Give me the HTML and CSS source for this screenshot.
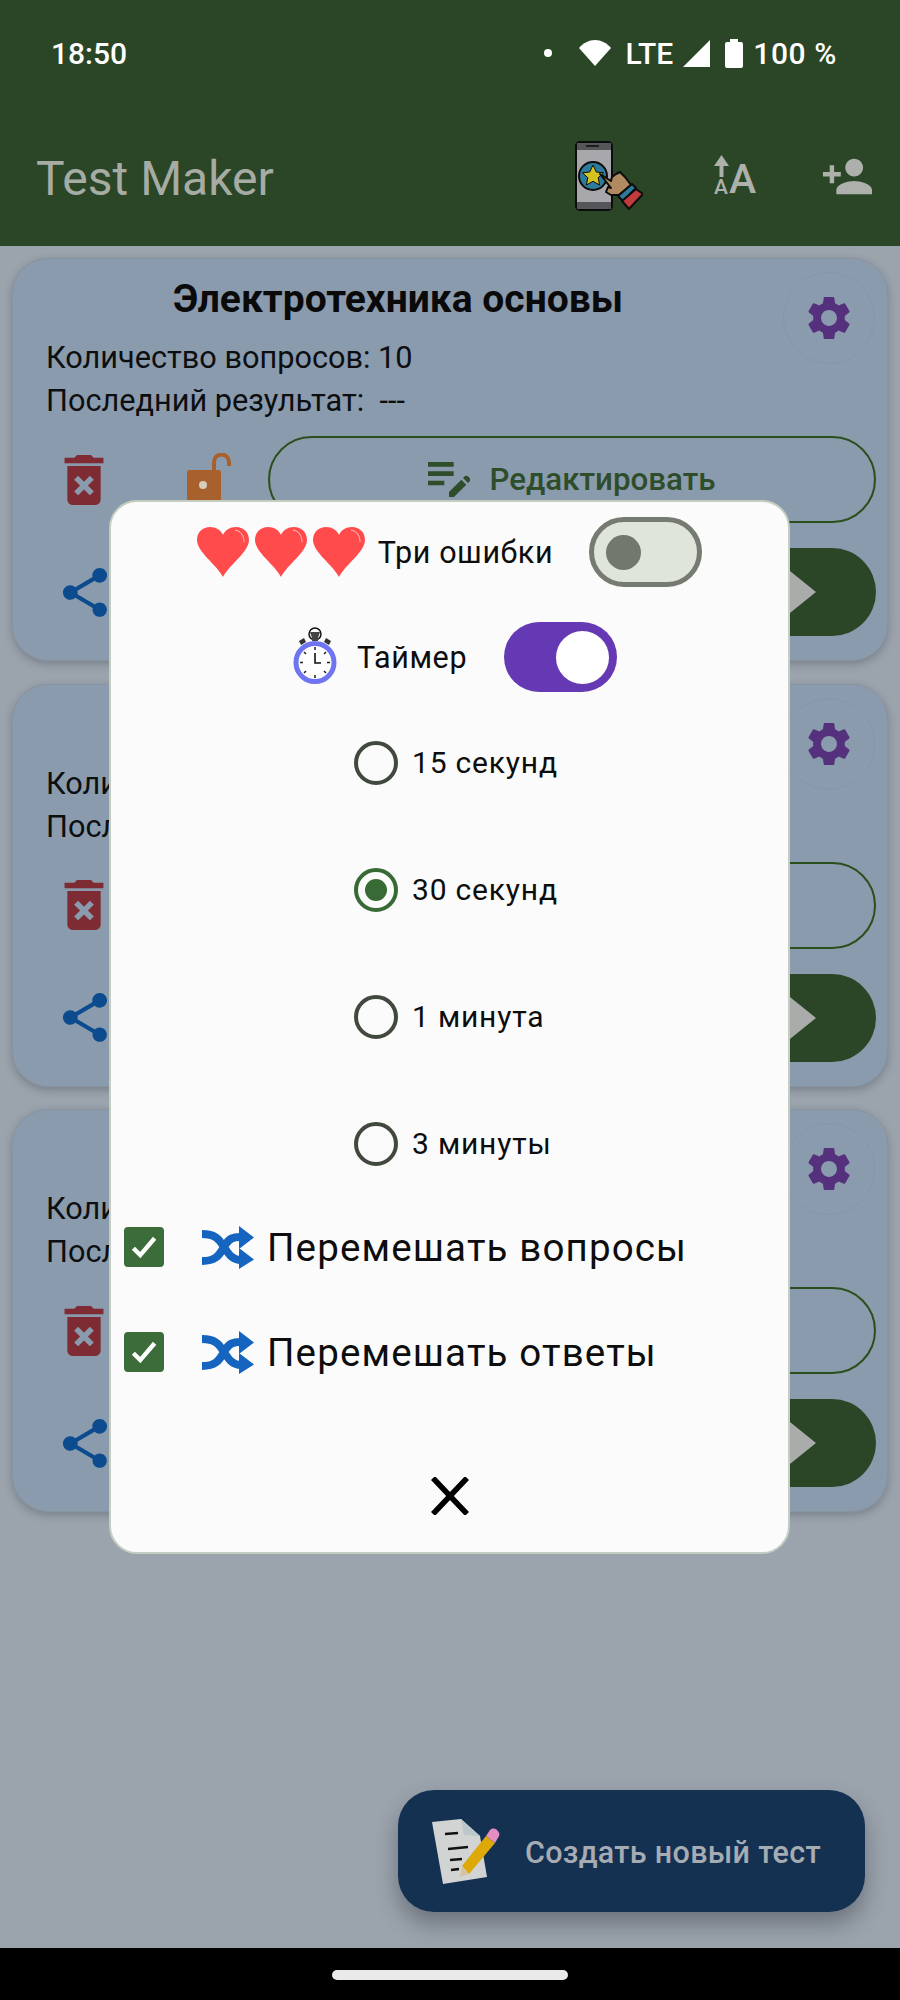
FILE: index.html
```html
<!DOCTYPE html>
<html lang="ru">
<head>
	<meta charset="UTF-8">
	<title>Test Maker</title>
	<link rel="stylesheet" href="styles.css">
</head>
<body>
<svg class="defs" aria-hidden="true">
	<symbol id="i-gear" viewBox="2.5 2 19 20"><path d="M19.14 12.94c.04-.3.06-.61.06-.94 0-.32-.02-.64-.07-.94l2.03-1.58c.18-.14.23-.41.12-.61l-1.92-3.32c-.12-.22-.37-.29-.59-.22l-2.39.96c-.5-.38-1.03-.7-1.62-.94l-.36-2.54c-.04-.24-.24-.41-.48-.41h-3.84c-.24 0-.43.17-.47.41l-.36 2.54c-.59.24-1.13.57-1.62.94l-2.39-.96c-.22-.08-.47 0-.59.22L2.74 8.87c-.12.21-.08.47.12.61l2.03 1.58c-.05.3-.09.63-.09.94s.02.64.07.94l-2.03 1.58c-.18.14-.23.41-.12.61l1.92 3.32c.12.22.37.29.59.22l2.39-.96c.5.38 1.03.7 1.62.94l.36 2.54c.05.24.24.41.48.41h3.84c.24 0 .44-.17.47-.41l.36-2.54c.59-.24 1.13-.56 1.62-.94l2.39.96c.22.08.47 0 .59-.22l1.92-3.32c.12-.22.07-.47-.12-.61l-2.01-1.58zM12 15.6c-1.98 0-3.6-1.62-3.6-3.6s1.62-3.6 3.6-3.6 3.6 1.62 3.6 3.6-1.62 3.6-3.6 3.6z"/></symbol>
	<symbol id="i-trash" viewBox="5 3 14 18"><path d="M6 19c0 1.1.9 2 2 2h8c1.1 0 2-.9 2-2V7H6v12zm2.46-7.12l1.41-1.41L12 12.59l2.12-2.12 1.41 1.41L13.41 14l2.12 2.12-1.41 1.41L12 15.41l-2.12 2.12-1.41-1.41L10.59 14l-2.13-2.12zM15.5 4l-1-1h-5l-1 1H5v2h14V4z"/></symbol>
	<symbol id="i-lock" viewBox="0 0 46 50">
		<path d="M1 19a2 2 0 0 1 2-2h30a2 2 0 0 1 2 2v31H1z" fill="#a8602c"/>
		<circle cx="17" cy="32" r="4" fill="#d8cdbd"/>
		<path d="M28 17V9a7.500 7.500 0 0 1 15 0v4" fill="none" stroke="#a8602c" stroke-width="4"/>
	</symbol>
	<symbol id="i-note" viewBox="3 6 18 15"><path d="M3 10h11v2H3zm0-2h11V6H3zm0 8h7v-2H3zm15.01-3.13l.71-.71c.39-.39 1.02-.39 1.41 0l.71.71c.39.39.39 1.02 0 1.41l-.71.71-2.12-2.12zm-.71.71L12 18.88V21h2.12l5.3-5.3-2.12-2.12z"/></symbol>
	<symbol id="i-share" viewBox="3 2 18 20"><path d="M18 16.08c-.76 0-1.44.3-1.96.77L8.91 12.7c.05-.23.09-.46.09-.7s-.04-.47-.09-.7l7.05-4.11c.54.5 1.25.81 2.04.81 1.66 0 3-1.34 3-3s-1.34-3-3-3-3 1.34-3 3c0 .24.04.47.09.7L8.04 9.81C7.5 9.31 6.79 9 6 9c-1.66 0-3 1.34-3 3s1.34 3 3 3c.79 0 1.5-.31 2.04-.81l7.12 4.16c-.05.21-.08.43-.08.65 0 1.61 1.31 2.92 2.92 2.92s2.92-1.31 2.92-2.92-1.31-2.92-2.92-2.92z"/></symbol>
	<symbol id="i-heart" viewBox="0 0 52 50">
		<path d="M26 50C20 38 0 25 0 13 0 5 6 0 13 0c6 0 11 3 13 8 2-5 7-8 13-8 7 0 13 5 13 13 0 12-20 25-26 37z" fill="#ff4b4b"/>
		<path d="M38 3c6 1 9 6 9 12" fill="none" stroke="#ffc4c4" stroke-width="1"/>
	</symbol>
	<symbol id="i-shuffle" viewBox="0 0 52 43">
		<path d="M0 8c13 0 17 5 22 13s9 13 17 13M0 35c13 0 17-5 22-14S31 11 39 11" fill="none" stroke="#1565c0" stroke-width="8"/>
		<path d="M37 0l15 11.500-15 11.500zM37 22l15 11.500L37 43z" fill="#1565c0"/>
	</symbol>
</svg>

<div class="phone">
	<header class="appbar">
		<div class="status">
			<span class="clock">18:50</span>
			<div class="status_right">
				<i class="dot"></i>
				<svg class="wifi" viewBox="0 0 32 26"><path d="M16 26L0 8C4 3 10 0 16 0s12 3 16 8z"/></svg>
				<span class="lte">LTE</span>
				<svg class="signal" viewBox="0 0 27 27"><path d="M27 0v27H0z"/></svg>
				<svg class="battery" viewBox="0 0 18 29"><path d="M5 0h8v3h3a2 2 0 0 1 2 2v22a2 2 0 0 1-2 2H2a2 2 0 0 1-2-2V5a2 2 0 0 1 2-2h3z"/></svg>
				<span class="percent">100 %</span>
			</div>
		</div>
		<div class="toolbar">
			<span class="app_title">Test Maker</span>
			<svg class="ic_phone" viewBox="0 0 68 70">
				<rect x="1" y="1" width="36" height="68" rx="4" fill="#a7a7ac" stroke="#0c0c0c" stroke-width="2"/>
				<path d="M2 2h34v7H2zM2 61h34v7H2z" fill="#55565a"/>
				<path d="M11 5h13" stroke="#0c0c0c" stroke-width="1.500"/>
				<circle cx="18" cy="35" r="14" fill="#2e7a9c" stroke="#0c0c0c" stroke-width="2"/>
				<path d="M18 24l3.300 7 7.200.8-5.300 4.900 1.400 7.300-6.600-3.700-6.600 3.700 1.400-7.300-5.300-4.900 7.200-.8z" fill="#d3c21f" stroke="#0c0c0c" stroke-width="1"/>
				<path d="M25 33l11 7 1-4 4-3 4-2 5 5 6 8-12 10h-8l-5-3 2-5 3 1z" fill="#b18a60" stroke="#0c0c0c" stroke-width="2" stroke-linejoin="round"/>
				<path d="M43 55l14-12 4 4-13 13z" fill="#2e7a9c" stroke="#0c0c0c" stroke-width="2" stroke-linejoin="round"/>
				<path d="M47 60l14-12 7 5-14 15z" fill="#c13a3c" stroke="#0c0c0c" stroke-width="2" stroke-linejoin="round"/>
			</svg>
			<div class="ic_size">
				<div class="ic_size_col">
					<svg class="ic_size_arrow" viewBox="0 0 15 22"><path d="M5.500 22V11H0L7.500 0 15 11H9.500v11z"/></svg>
					<span class="ic_size_small">A</span>
				</div>
				<span class="ic_size_big">A</span>
			</div>
			<svg class="ic_person" viewBox="1 4 22 16"><path d="M15 12c2.210 0 4-1.790 4-4s-1.790-4-4-4-4 1.790-4 4 1.790 4 4 4zm-9-2V7H4v3H1v2h3v3h2v-3h3v-2H6zm9 4c-2.670 0-8 1.340-8 4v2h16v-2c0-2.660-5.330-4-8-4z"/></svg>
		</div>
	</header>

	<main class="list">
		<section class="card">
			<div class="card_head">
				<div class="card_info">
					<h2 class="card_title">Электротехника основы</h2>
					<p class="card_line">Количество вопросов: 10</p>
					<p class="card_line">Последний результат:&nbsp; ---</p>
				</div>
				<div class="gear_btn"><svg class="gear"><use href="#i-gear"/></svg></div>
			</div>
			<div class="card_row row_edit">
				<svg class="trash"><use href="#i-trash"/></svg>
				<svg class="lock"><use href="#i-lock"/></svg>
				<div class="edit_btn"><svg class="edit_ic"><use href="#i-note"/></svg>Редактировать</div>
			</div>
			<div class="card_row row_start">
				<svg class="share"><use href="#i-share"/></svg>
				<div class="start_btn"><i class="play"></i></div>
			</div>
		</section>

		<section class="card">
			<div class="card_head">
				<div class="card_info">
					<h2 class="card_title">&nbsp;</h2>
					<p class="card_line">Количество вопросов: 10</p>
					<p class="card_line">Последний результат:&nbsp; ---</p>
				</div>
				<div class="gear_btn"><svg class="gear"><use href="#i-gear"/></svg></div>
			</div>
			<div class="card_row row_edit">
				<svg class="trash"><use href="#i-trash"/></svg>
				<svg class="lock"><use href="#i-lock"/></svg>
				<div class="edit_btn"></div>
			</div>
			<div class="card_row row_start">
				<svg class="share"><use href="#i-share"/></svg>
				<div class="start_btn"><i class="play"></i></div>
			</div>
		</section>

		<section class="card">
			<div class="card_head">
				<div class="card_info">
					<h2 class="card_title">&nbsp;</h2>
					<p class="card_line">Количество вопросов: 10</p>
					<p class="card_line">Последний результат:&nbsp; ---</p>
				</div>
				<div class="gear_btn"><svg class="gear"><use href="#i-gear"/></svg></div>
			</div>
			<div class="card_row row_edit">
				<svg class="trash"><use href="#i-trash"/></svg>
				<svg class="lock"><use href="#i-lock"/></svg>
				<div class="edit_btn"></div>
			</div>
			<div class="card_row row_start">
				<svg class="share"><use href="#i-share"/></svg>
				<div class="start_btn"><i class="play"></i></div>
			</div>
		</section>

		<div class="fab">
			<svg class="fab_ic" viewBox="0 0 68 67">
				<path d="M0 4L29 1l19 17 7 41-44 7z" fill="#d2d3d3"/>
				<path d="M29 1l3 16 16 1z" fill="#bcc6cb"/>
				<path d="M13 16l13-1M16 31l20-2M18 42l12-1M19 52l8-1" stroke="#111" stroke-width="2.500"/>
				<path d="M30 48l24-30 9 7-26 31z" fill="#dca908"/>
				<path d="M30 48l7 8-9 3z" fill="#d8c49c"/>
				<path d="M54 18l4-6c2-2 5-2 7 0s3 4 2 6l-4 7z" fill="#e58fc0"/>
			</svg>
			<span class="fab_text">Создать новый тест</span>
		</div>
	</main>

	<footer class="navbar"><i class="nav_pill"></i></footer>

	<div class="dialog">
		<div class="opt_row row_lives">
			<div class="hearts">
				<svg class="heart"><use href="#i-heart"/></svg>
				<svg class="heart"><use href="#i-heart"/></svg>
				<svg class="heart"><use href="#i-heart"/></svg>
			</div>
			<span class="opt_label">Три ошибки</span>
			<div class="switch switch_off"><i class="knob"></i></div>
		</div>
		<div class="opt_row row_timer">
			<svg class="timer" viewBox="0 0 46 57">
				<circle cx="23" cy="7" r="6" fill="none" stroke="#111" stroke-width="1.500"/>
				<path d="M18 5h10l-2 6v3h-6v-3z" fill="#444"/>
				<path d="M7 14l5-3 2 4-5 3zM39 14l-5-3-2 4 5 3z" fill="#333"/>
				<circle cx="23" cy="35.500" r="19" fill="#fff" stroke="#6f75f0" stroke-width="5"/>
				<path d="M23 20v3M23 48v3M8 35.500h3M35 35.500h3M12 25l2 2M34 25l-2 2M12 46l2-2M34 46l-2-2" stroke="#222" stroke-width="1.500"/>
				<path d="M23 26v10h6" fill="none" stroke="#111" stroke-width="1.600"/>
			</svg>
			<span class="opt_label">Таймер</span>
			<div class="switch switch_on"><i class="knob"></i></div>
		</div>

		<div class="radios">
			<label class="radio_row"><i class="radio"></i>15 секунд</label>
			<label class="radio_row"><i class="radio radio_on"></i>30 секунд</label>
			<label class="radio_row"><i class="radio"></i>1 минута</label>
			<label class="radio_row"><i class="radio"></i>3 минуты</label>
		</div>

		<div class="check_row">
			<i class="check"><svg viewBox="0 0 24 24"><path d="M3.500 13l5.500 5.500L20.500 5" fill="none" stroke="#fff" stroke-width="3.500"/></svg></i>
			<svg class="shuffle"><use href="#i-shuffle"/></svg>
			<span class="check_text">Перемешать вопросы</span>
		</div>
		<div class="check_row">
			<i class="check"><svg viewBox="0 0 24 24"><path d="M3.500 13l5.500 5.500L20.500 5" fill="none" stroke="#fff" stroke-width="3.500"/></svg></i>
			<svg class="shuffle"><use href="#i-shuffle"/></svg>
			<span class="check_text">Перемешать ответы</span>
		</div>

		<svg class="close" viewBox="0 0 38 38"><path d="M2 1l34 36M36 1L2 37" fill="none" stroke="#000" stroke-width="5.500"/></svg>
	</div>
</div>
</body>
</html>
```

FILE: styles.css
```css
*{
	box-sizing:border-box;
	margin:0;
	padding:0;
}

body{
	background-color:#9ba3ad;
	font-family:Roboto,"Noto Sans",sans-serif;
}

i{
	display:block;
}

.defs{
	position:absolute;
	width:0;
	height:0;
}

.phone{
	position:relative;
	width:900px;
	height:2000px;
	display:flex;
	flex-direction:column;
	overflow:hidden;
}

/* top bar */
.appbar{
	height:246px;
	background-color:#2a4627;
	flex:none;
}

.status{
	height:106px;
	padding:0 63px 0 51px;
	display:flex;
	justify-content:space-between;
	align-items:center;
	color:#fff;
	font-size:30px;
	font-weight:500;
}

.status_right{
	display:flex;
	align-items:center;
}

.dot{
	width:8px;
	height:8px;
	border-radius:50%;
	background-color:#fff;
	margin-right:27px;
}

.wifi{
	width:32px;
	height:26px;
	fill:#fff;
	margin-right:15px;
}

.lte{
	margin-right:10px;
}

.signal{
	width:27px;
	height:27px;
	fill:#fff;
	margin-right:15px;
}

.battery{
	width:18px;
	height:29px;
	fill:#fff;
	margin-right:10px;
}

.percent{
	letter-spacing:.6px;
}

.toolbar{
	height:140px;
	padding-left:36px;
	display:flex;
	align-items:center;
}

.app_title{
	width:539px;
	margin-top:5px;
	font-size:48px;
	color:#a6aca4;
}

.ic_phone{
	width:68px;
	height:70px;
}

.ic_size{
	height:42px;
	margin-left:70px;
	display:flex;
	align-items:flex-end;
	color:#adb0ab;
	font-weight:500;
}

.ic_size_col{
	width:16px;
	display:flex;
	flex-direction:column;
	align-items:center;
}

.ic_size_arrow{
	display:block;
	width:15px;
	height:22px;
	fill:#adb0ab;
}

.ic_size_small{
	font-size:21px;
	line-height:20px;
}

.ic_size_big{
	font-size:41px;
	line-height:36px;
}

.ic_person{
	width:49px;
	height:37px;
	fill:#adb0ab;
	margin-left:67px;
}

/* cards */
.list{
	position:relative;
	flex:1;
	padding:12px 12px 0;
}

.card{
	height:403px;
	margin-bottom:22.5px;
	padding:20px 11px 0 0;
	background-color:#8a9bad;
	border:1px solid #8894a0;
	border-radius:36px;
	box-shadow:0 3px 8px rgba(40,50,60,.3);
}

.card_head{
	display:flex;
	height:157px;
}

.card_info{
	width:770px;
}

.card_title{
	height:40px;
	margin-bottom:17px;
	font-size:39px;
	line-height:40px;
	font-weight:700;
	text-align:center;
	color:#0a0a0a;
}

.card_line{
	padding-left:33px;
	font-size:30.700px;
	line-height:43px;
	color:#0d0e10;
	white-space:nowrap;
}

.gear_btn{
	width:92px;
	height:92px;
	margin-top:-7px;
	border:1px solid #8496a8;
	border-radius:50%;
	display:flex;
	align-items:center;
	justify-content:center;
}

.gear{
	width:42px;
	height:44px;
	fill:#55307d;
}

.card_row{
	display:flex;
	align-items:center;
	position:relative;
}

.row_edit{
	height:87px;
}

.row_start{
	height:88px;
	margin-top:25px;
}

.trash{
	width:40px;
	height:50px;
	margin-left:51px;
	fill:#7f2b33;
}

.lock{
	width:46px;
	height:50px;
	margin-left:82px;
	margin-top:-4px;
}

.edit_btn{
	width:608px;
	height:87px;
	margin-left:36px;
	border:2.500px solid #2a4f1c;
	border-radius:44px;
	display:flex;
	align-items:center;
	justify-content:center;
	font-size:31.300px;
	font-weight:500;
	color:#2e4d2a;
}

.edit_ic{
	width:42px;
	height:35px;
	margin-right:19px;
	fill:#2e4d2a;
}

.share{
	width:46px;
	height:49px;
	margin-left:49px;
	fill:#0b4b8e;
}

.start_btn{
	width:608px;
	height:88px;
	margin-left:160px;
	background-color:#2a4627;
	border-radius:44px;
	display:flex;
	align-items:center;
	justify-content:flex-end;
	padding-right:60px;
}

.play{
	border-left:36px solid #a9acaa;
	border-top:29px solid transparent;
	border-bottom:29px solid transparent;
}

/* create button */
.fab{
	position:absolute;
	left:398px;
	top:1544px;
	width:467px;
	height:122px;
	background-color:#143152;
	border-radius:36px;
	box-shadow:0 12px 22px rgba(40,46,52,.4);
	display:flex;
	align-items:center;
	padding-left:34px;
}

.fab_ic{
	width:68px;
	height:67px;
}

.fab_text{
	margin-left:25px;
	margin-top:2px;
	font-size:30.500px;
	font-weight:500;
	letter-spacing:.3px;
	color:#a7acb2;
}

.navbar{
	height:52px;
	background-color:#000;
	flex:none;
	display:flex;
	justify-content:center;
	align-items:center;
}

.nav_pill{
	width:236px;
	height:10px;
	margin-top:1px;
	background-color:#eaeaea;
	border-radius:5px;
}

/* dialog */
.dialog{
	position:absolute;
	left:109px;
	top:500px;
	width:681px;
	height:1054px;
	background-color:#fbfbfb;
	border:2px solid #c5cdc0;
	border-radius:28px;
	color:#0d0d0d;
}

.opt_row{
	height:70px;
	display:flex;
	align-items:center;
	justify-content:center;
}

.row_lives{
	margin-top:15px;
}

.row_timer{
	margin-top:35px;
	padding-left:10px;
}

.hearts{
	display:flex;
	gap:6px;
	margin-right:13px;
}

.heart{
	width:52px;
	height:50px;
}

.opt_label{
	font-size:30.500px;
	letter-spacing:.6px;
}

.row_lives .switch{
	margin-left:36px;
}

.row_timer .switch{
	margin-left:37px;
}

.timer{
	width:46px;
	height:57px;
	margin-right:19px;
	margin-top:-3px;
}

.switch{
	width:113px;
	height:70px;
	border-radius:35px;
	display:flex;
	align-items:center;
}

.switch_off{
	background-color:#dfe5da;
	border:5px solid #757b70;
	padding-left:12px;
}

.switch_off .knob{
	width:35px;
	height:35px;
	border-radius:50%;
	background-color:#72786d;
}

.switch_on{
	background-color:#6538b4;
	justify-content:flex-end;
	padding-right:8px;
}

.switch_on .knob{
	width:53px;
	height:53px;
	border-radius:50%;
	background-color:#fff;
}

.radios{
	margin-top:7px;
	padding-left:243px;
}

.radio_row{
	height:127px;
	display:flex;
	align-items:center;
	font-size:30px;
	letter-spacing:.8px;
}

.radio{
	width:44px;
	height:44px;
	margin-right:14px;
	border:4px solid #41483d;
	border-radius:50%;
}

.radio_on{
	border-color:#386a35;
	position:relative;
}

.radio_on:after{
	content:"";
	position:absolute;
	left:7px;
	top:7px;
	width:22px;
	height:22px;
	border-radius:50%;
	background-color:#386a35;
}

.check_row{
	height:80px;
	margin-bottom:25px;
	padding-left:13px;
	display:flex;
	align-items:center;
}

.check{
	width:40px;
	height:40px;
	background-color:#3c6c39;
	border-radius:4px;
	padding:5px;
}

.check svg{
	display:block;
	width:30px;
	height:30px;
}

.shuffle{
	width:52px;
	height:43px;
	margin-left:38px;
}

.check_text{
	margin-left:13px;
	font-size:38.500px;
	letter-spacing:1.150px;
}

.close{
	display:block;
	width:38px;
	height:38px;
	margin:85px auto 0;
}
```
